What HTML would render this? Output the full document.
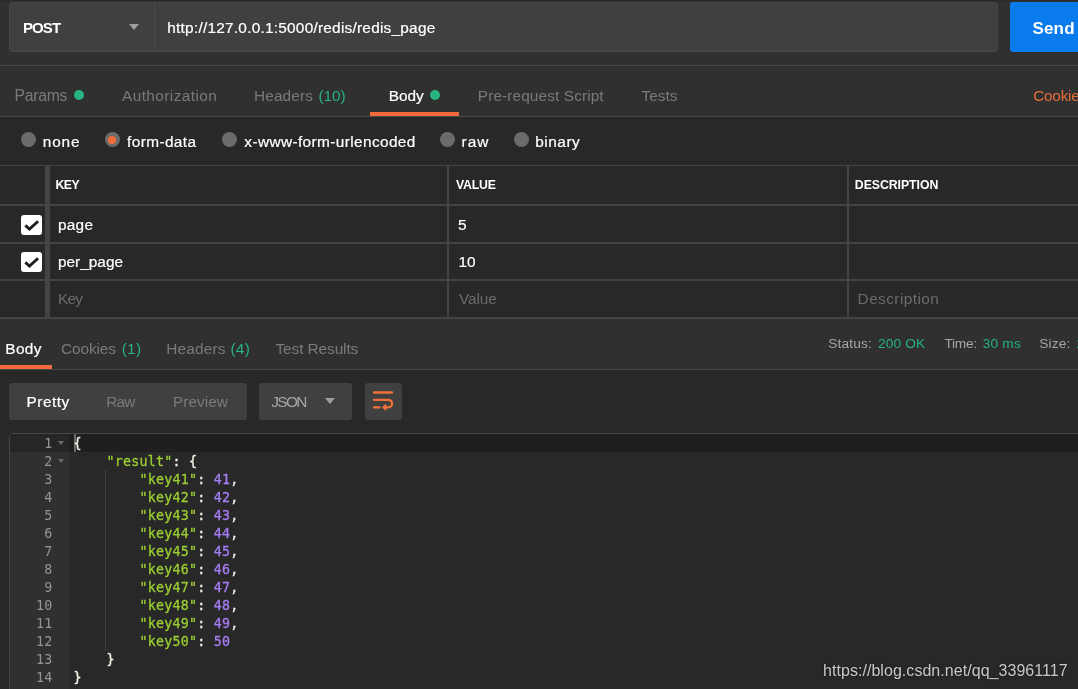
<!DOCTYPE html>
<html lang="en">
<head>
<meta charset="utf-8">
<title>Postman</title>
<style>
html,body{margin:0;padding:0;}
body{width:1078px;height:689px;overflow:hidden;background:#303030;position:relative;font-family:"Liberation Sans",sans-serif;}
.a{position:absolute;}
.t{position:absolute;white-space:pre;}
.c{-webkit-text-stroke:0.3px;}
.s{-webkit-text-stroke:0.2px;}
.radio{position:absolute;width:15px;height:15px;border-radius:50%;background:#6b6b6b;}
.hl{position:absolute;left:0;width:1078px;height:1px;background:#464646;}
.vl{position:absolute;width:1px;background:#464646;}
.cb{position:absolute;width:21.3px;height:20.4px;border-radius:3px;background:#fff;}
.tri{position:absolute;width:0;height:0;border-left:5px solid transparent;border-right:5px solid transparent;border-top:6.2px solid #9e9e9e;}
</style>
</head>
<body>
<!-- top strip -->
<div class="a" style="left:0;top:0;width:1078px;height:1px;background:#2a2a2a"></div>
<!-- url bar -->
<div class="a" style="left:9px;top:2px;width:989px;height:50px;border-radius:3px;background:#404040;border:1px solid #474747;box-sizing:border-box"></div>
<div class="a" style="left:154px;top:2px;width:1px;height:50px;background:#4a4a4a"></div>
<div class="tri" style="left:129px;top:23.8px"></div>
<!-- send -->
<div class="a" style="left:1010px;top:2px;width:80px;height:50px;border-radius:3px;background:#097bed"></div>
<div class="hl" style="top:65px"></div>
<!-- request tabs -->
<div class="a" style="left:74px;top:90.2px;width:10.2px;height:10.2px;border-radius:50%;background:#26b47f"></div>
<div class="a" style="left:429.8px;top:90.2px;width:10.2px;height:10.2px;border-radius:50%;background:#26b47f"></div>
<div class="a" style="left:370px;top:112px;width:89px;height:4px;background:#f26b3a"></div>
<div class="hl" style="top:116px"></div>
<!-- request body panel -->
<div class="a" style="left:0;top:117px;width:1078px;height:202px;background:#282828"></div>
<div class="radio" style="left:21px;top:132px"></div>
<div class="radio" style="left:104.5px;top:132px"><div class="a" style="left:3.5px;top:3.5px;width:8px;height:8px;border-radius:50%;background:#f26b3a"></div></div>
<div class="radio" style="left:222px;top:132px"></div>
<div class="radio" style="left:440px;top:132px"></div>
<div class="radio" style="left:514px;top:132px"></div>
<!-- table -->
<div class="hl" style="top:165px;background:#444"></div>
<div class="hl" style="top:204px;height:2px;background:#444"></div>
<div class="hl" style="top:242px;height:2px;background:#444"></div>
<div class="hl" style="top:279px;height:2px;background:#444"></div>
<div class="hl" style="top:317px;height:2px;background:#444"></div>
<div class="a" style="left:45px;top:166px;width:5px;height:152px;background:#444"></div>
<div class="vl" style="left:447px;top:166px;height:152px;width:2px;background:#444"></div>
<div class="vl" style="left:847px;top:166px;height:152px;width:2px;background:#444"></div>
<div class="cb" style="left:20.9px;top:214.8px"><svg width="21" height="20" viewBox="0 0 21 20"><path d="M4.3 10.4 L8.5 14.1 L17.1 6.3" fill="none" stroke="#1c1c1c" stroke-width="2.8"/></svg></div>
<div class="cb" style="left:20.9px;top:252px"><svg width="21" height="20" viewBox="0 0 21 20"><path d="M4.3 10.4 L8.5 14.1 L17.1 6.3" fill="none" stroke="#1c1c1c" stroke-width="2.8"/></svg></div>
<!-- response tabs -->
<div class="a" style="left:0;top:365px;width:52px;height:4px;background:#f26b3a"></div>
<div class="hl" style="top:369px"></div>
<!-- response panel -->
<div class="a" style="left:0;top:370px;width:1078px;height:319px;background:#282828"></div>
<div class="a" style="left:9px;top:383px;width:238px;height:37px;border-radius:3px;background:#404040"></div>
<div class="a" style="left:259px;top:383px;width:93px;height:37px;border-radius:3px;background:#404040"></div>
<div class="tri" style="left:325.2px;top:398.3px"></div>
<div class="a" style="left:365px;top:383px;width:37px;height:37px;border-radius:3px;background:#404040">
<svg width="37" height="37" viewBox="0 0 37 37"><g fill="none" stroke="#f5713a" stroke-width="2.3" stroke-linecap="round"><path d="M9 9.5H27"/><path d="M9 16.8H23.3a3.7 3.7 0 0 1 0 7.5H19"/><path d="M9 24.4H14.5"/></g><path d="M16.8 24.3L21.2 20.5V28.1Z" fill="#f5713a"/></svg>
</div>
<!-- editor -->
<div class="a" style="left:9px;top:433px;width:1080px;height:270px;border:1px solid #464646;border-radius:5px 0 0 0;background:#282828;box-sizing:border-box"></div>
<div class="a" style="left:10px;top:434px;width:59.3px;height:255px;background:#303030;border-radius:4px 0 0 0"></div>
<div class="a" style="left:10px;top:434px;width:59.3px;height:18px;background:#262626;border-radius:4px 0 0 0"></div>
<div class="a" style="left:69.3px;top:434px;width:1009px;height:18px;background:#1f1f1f"></div>
<div class="a" style="left:74px;top:434px;width:2px;height:18px;background:#6a6a6a"></div>
<div class="a" style="left:105px;top:471px;width:0;height:179px;border-left:1px dotted #555"></div>
<div class="tri" style="left:57.5px;top:441px;border-left-width:3.5px;border-right-width:3.5px;border-top:4px solid #6a6a6a"></div>
<div class="tri" style="left:57.5px;top:459px;border-left-width:3.5px;border-right-width:3.5px;border-top:4px solid #6a6a6a"></div>
<div class="a" style="left:0;top:0;width:1078px;height:689px;will-change:transform">
<span class="t" style="left:23px;top:19px;font-size:15px;line-height:17px;color:#ffffff;font-weight:700;letter-spacing:-0.933px;">POST</span>
<span class="t s" style="left:167.3px;top:19px;font-size:15.4px;line-height:17px;color:#ffffff;letter-spacing:0.235px;">http://127.0.0.1:5000/redis/redis_page</span>
<span class="t" style="left:1032.4px;top:19px;font-size:17px;line-height:19px;color:#ffffff;font-weight:700;letter-spacing:0.2px;">Send</span>
<span class="t" style="left:14.4px;top:87px;font-size:15.8px;line-height:17px;color:#7a7a7a;letter-spacing:-0.26px;">Params</span>
<span class="t" style="left:122px;top:87px;font-size:15.4px;line-height:17px;color:#7a7a7a;letter-spacing:0.417px;">Authorization</span>
<span class="t" style="left:254px;top:87px;font-size:15.4px;line-height:17px;color:#7a7a7a;letter-spacing:0.117px;">Headers</span>
<span class="t" style="left:318.4px;top:87px;font-size:15.4px;line-height:17px;color:#26b47f;letter-spacing:-0.033px;">(10)</span>
<span class="t s" style="left:388.8px;top:87px;font-size:15.4px;line-height:17px;color:#ffffff;letter-spacing:-0.033px;">Body</span>
<span class="t" style="left:477.8px;top:87px;font-size:15.4px;line-height:17px;color:#7a7a7a;letter-spacing:0.106px;">Pre-request Script</span>
<span class="t" style="left:641.6px;top:87px;font-size:15.4px;line-height:17px;color:#7a7a7a;letter-spacing:-0.025px;">Tests</span>
<span class="t" style="left:1033.3px;top:87px;font-size:15.4px;line-height:17px;color:#e66e3a;letter-spacing:-0.3px;">Cookies</span>
<span class="t s" style="left:42.8px;top:133px;font-size:15.4px;line-height:17px;color:#ffffff;letter-spacing:0.8px;">none</span>
<span class="t s" style="left:127px;top:133px;font-size:15.4px;line-height:17px;color:#ffffff;letter-spacing:0.4px;">form-data</span>
<span class="t s" style="left:244.3px;top:133px;font-size:15.4px;line-height:17px;color:#ffffff;letter-spacing:0.385px;">x-www-form-urlencoded</span>
<span class="t s" style="left:461.6px;top:133px;font-size:15.4px;line-height:17px;color:#ffffff;letter-spacing:0.95px;">raw</span>
<span class="t s" style="left:535.2px;top:133px;font-size:15.4px;line-height:17px;color:#ffffff;letter-spacing:0.54px;">binary</span>
<span class="t" style="left:55.5px;top:178px;font-size:12.3px;line-height:14px;color:#ffffff;font-weight:700;letter-spacing:-0.55px;">KEY</span>
<span class="t" style="left:456px;top:178px;font-size:12.3px;line-height:14px;color:#ffffff;font-weight:700;letter-spacing:-0.2px;">VALUE</span>
<span class="t" style="left:854.8px;top:178px;font-size:12.3px;line-height:14px;color:#ffffff;font-weight:700;letter-spacing:-0.05px;">DESCRIPTION</span>
<span class="t s" style="left:58px;top:216px;font-size:15.4px;line-height:17px;color:#ffffff;letter-spacing:0.233px;">page</span>
<span class="t s" style="left:458px;top:216px;font-size:15.4px;line-height:17px;color:#ffffff;">5</span>
<span class="t s" style="left:58px;top:253px;font-size:15.4px;line-height:17px;color:#ffffff;">per_page</span>
<span class="t s" style="left:458.6px;top:253px;font-size:15.4px;line-height:17px;color:#ffffff;letter-spacing:-0.2px;">10</span>
<span class="t" style="left:58px;top:290px;font-size:15.4px;line-height:17px;color:#6b6b6b;letter-spacing:-0.8px;">Key</span>
<span class="t" style="left:459px;top:290px;font-size:15.4px;line-height:17px;color:#6b6b6b;letter-spacing:-0.125px;">Value</span>
<span class="t" style="left:857.6px;top:290px;font-size:15.4px;line-height:17px;color:#6b6b6b;letter-spacing:0.42px;">Description</span>
<span class="t s" style="left:5.3px;top:340px;font-size:15.4px;line-height:17px;color:#ffffff;letter-spacing:0.367px;">Body</span>
<span class="t" style="left:61.1px;top:340px;font-size:15.4px;line-height:17px;color:#7a7a7a;letter-spacing:-0.133px;">Cookies</span>
<span class="t" style="left:121.7px;top:340px;font-size:15.4px;line-height:17px;color:#26b47f;letter-spacing:0.3px;">(1)</span>
<span class="t" style="left:166.3px;top:340px;font-size:15.4px;line-height:17px;color:#7a7a7a;letter-spacing:0.15px;">Headers</span>
<span class="t" style="left:230.4px;top:340px;font-size:15.4px;line-height:17px;color:#26b47f;letter-spacing:0.3px;">(4)</span>
<span class="t" style="left:275.5px;top:340px;font-size:15.4px;line-height:17px;color:#7a7a7a;letter-spacing:-0.091px;">Test Results</span>
<span class="t" style="left:828.3px;top:336px;font-size:13.7px;line-height:15px;color:#a6a6a6;letter-spacing:0.15px;">Status:</span>
<span class="t" style="left:878.1px;top:336px;font-size:13.7px;line-height:15px;color:#26b47f;letter-spacing:0.1px;">200 OK</span>
<span class="t" style="left:944.5px;top:336px;font-size:13.7px;line-height:15px;color:#a6a6a6;letter-spacing:-0.275px;">Time:</span>
<span class="t" style="left:982.8px;top:336px;font-size:13.7px;line-height:15px;color:#26b47f;letter-spacing:0.175px;">30 ms</span>
<span class="t" style="left:1039.2px;top:336px;font-size:13.7px;line-height:15px;color:#a6a6a6;letter-spacing:0.15px;">Size:</span>
<span class="t" style="left:1076.5px;top:336px;font-size:13.7px;line-height:15px;color:#26b47f;">2</span>
<span class="t s" style="left:26.5px;top:393px;font-size:15.4px;line-height:17px;color:#ffffff;letter-spacing:0.5px;">Pretty</span>
<span class="t" style="left:106.2px;top:393px;font-size:15.4px;line-height:17px;color:#7a7a7a;letter-spacing:-0.8px;">Raw</span>
<span class="t" style="left:173px;top:393px;font-size:15.4px;line-height:17px;color:#7a7a7a;letter-spacing:0.033px;">Preview</span>
<span class="t" style="left:271.3px;top:393px;font-size:15.4px;line-height:17px;color:#a6a6a6;letter-spacing:-1.633px;">JSON</span>
<span class="t" style="left:823px;top:662px;font-size:16px;line-height:17px;color:#c9c9c9;letter-spacing:0.047px;text-shadow:0 0 2px rgba(0,0,0,.55);">https://blog.csdn.net/qq_33961117</span>
<span class="t" style="left:44.35px;top:436px;font-size:13.3px;line-height:15px;color:#969696;font-family:'DejaVu Sans Mono', 'Liberation Mono', monospace;letter-spacing:0.243px;">1</span>
<span class="t" style="left:44.35px;top:454px;font-size:13.3px;line-height:15px;color:#969696;font-family:'DejaVu Sans Mono', 'Liberation Mono', monospace;letter-spacing:0.243px;">2</span>
<span class="t" style="left:44.35px;top:472px;font-size:13.3px;line-height:15px;color:#969696;font-family:'DejaVu Sans Mono', 'Liberation Mono', monospace;letter-spacing:0.243px;">3</span>
<span class="t" style="left:44.35px;top:490px;font-size:13.3px;line-height:15px;color:#969696;font-family:'DejaVu Sans Mono', 'Liberation Mono', monospace;letter-spacing:0.243px;">4</span>
<span class="t" style="left:44.35px;top:508px;font-size:13.3px;line-height:15px;color:#969696;font-family:'DejaVu Sans Mono', 'Liberation Mono', monospace;letter-spacing:0.243px;">5</span>
<span class="t" style="left:44.35px;top:526px;font-size:13.3px;line-height:15px;color:#969696;font-family:'DejaVu Sans Mono', 'Liberation Mono', monospace;letter-spacing:0.243px;">6</span>
<span class="t" style="left:44.35px;top:544px;font-size:13.3px;line-height:15px;color:#969696;font-family:'DejaVu Sans Mono', 'Liberation Mono', monospace;letter-spacing:0.243px;">7</span>
<span class="t" style="left:44.35px;top:562px;font-size:13.3px;line-height:15px;color:#969696;font-family:'DejaVu Sans Mono', 'Liberation Mono', monospace;letter-spacing:0.243px;">8</span>
<span class="t" style="left:44.35px;top:580px;font-size:13.3px;line-height:15px;color:#969696;font-family:'DejaVu Sans Mono', 'Liberation Mono', monospace;letter-spacing:0.243px;">9</span>
<span class="t" style="left:36.1px;top:598px;font-size:13.3px;line-height:15px;color:#969696;font-family:'DejaVu Sans Mono', 'Liberation Mono', monospace;letter-spacing:0.243px;">10</span>
<span class="t" style="left:36.1px;top:616px;font-size:13.3px;line-height:15px;color:#969696;font-family:'DejaVu Sans Mono', 'Liberation Mono', monospace;letter-spacing:0.243px;">11</span>
<span class="t" style="left:36.1px;top:634px;font-size:13.3px;line-height:15px;color:#969696;font-family:'DejaVu Sans Mono', 'Liberation Mono', monospace;letter-spacing:0.243px;">12</span>
<span class="t" style="left:36.1px;top:652px;font-size:13.3px;line-height:15px;color:#969696;font-family:'DejaVu Sans Mono', 'Liberation Mono', monospace;letter-spacing:0.243px;">13</span>
<span class="t" style="left:36.1px;top:670px;font-size:13.3px;line-height:15px;color:#969696;font-family:'DejaVu Sans Mono', 'Liberation Mono', monospace;letter-spacing:0.243px;">14</span>
<span class="t c" style="left:73.5px;top:436px;font-size:13.3px;line-height:15px;color:#f2f2e6;font-family:'DejaVu Sans Mono', 'Liberation Mono', monospace;letter-spacing:0.243px;">{</span>
<span class="t c" style="left:106.5px;top:454px;font-size:13.3px;line-height:15px;color:#9acd32;font-family:'DejaVu Sans Mono', 'Liberation Mono', monospace;letter-spacing:0.243px;">"result"</span>
<span class="t c" style="left:172.5px;top:454px;font-size:13.3px;line-height:15px;color:#f2f2e6;font-family:'DejaVu Sans Mono', 'Liberation Mono', monospace;letter-spacing:0.243px;">: {</span>
<span class="t c" style="left:139.5px;top:472px;font-size:13.3px;line-height:15px;color:#9acd32;font-family:'DejaVu Sans Mono', 'Liberation Mono', monospace;letter-spacing:0.243px;">"key41"</span>
<span class="t c" style="left:197.25px;top:472px;font-size:13.3px;line-height:15px;color:#f2f2e6;font-family:'DejaVu Sans Mono', 'Liberation Mono', monospace;letter-spacing:0.243px;">:</span>
<span class="t c" style="left:213.75px;top:472px;font-size:13.3px;line-height:15px;color:#a77df5;font-family:'DejaVu Sans Mono', 'Liberation Mono', monospace;letter-spacing:0.243px;">41</span>
<span class="t c" style="left:230.25px;top:472px;font-size:13.3px;line-height:15px;color:#f2f2e6;font-family:'DejaVu Sans Mono', 'Liberation Mono', monospace;letter-spacing:0.243px;">,</span>
<span class="t c" style="left:139.5px;top:490px;font-size:13.3px;line-height:15px;color:#9acd32;font-family:'DejaVu Sans Mono', 'Liberation Mono', monospace;letter-spacing:0.243px;">"key42"</span>
<span class="t c" style="left:197.25px;top:490px;font-size:13.3px;line-height:15px;color:#f2f2e6;font-family:'DejaVu Sans Mono', 'Liberation Mono', monospace;letter-spacing:0.243px;">:</span>
<span class="t c" style="left:213.75px;top:490px;font-size:13.3px;line-height:15px;color:#a77df5;font-family:'DejaVu Sans Mono', 'Liberation Mono', monospace;letter-spacing:0.243px;">42</span>
<span class="t c" style="left:230.25px;top:490px;font-size:13.3px;line-height:15px;color:#f2f2e6;font-family:'DejaVu Sans Mono', 'Liberation Mono', monospace;letter-spacing:0.243px;">,</span>
<span class="t c" style="left:139.5px;top:508px;font-size:13.3px;line-height:15px;color:#9acd32;font-family:'DejaVu Sans Mono', 'Liberation Mono', monospace;letter-spacing:0.243px;">"key43"</span>
<span class="t c" style="left:197.25px;top:508px;font-size:13.3px;line-height:15px;color:#f2f2e6;font-family:'DejaVu Sans Mono', 'Liberation Mono', monospace;letter-spacing:0.243px;">:</span>
<span class="t c" style="left:213.75px;top:508px;font-size:13.3px;line-height:15px;color:#a77df5;font-family:'DejaVu Sans Mono', 'Liberation Mono', monospace;letter-spacing:0.243px;">43</span>
<span class="t c" style="left:230.25px;top:508px;font-size:13.3px;line-height:15px;color:#f2f2e6;font-family:'DejaVu Sans Mono', 'Liberation Mono', monospace;letter-spacing:0.243px;">,</span>
<span class="t c" style="left:139.5px;top:526px;font-size:13.3px;line-height:15px;color:#9acd32;font-family:'DejaVu Sans Mono', 'Liberation Mono', monospace;letter-spacing:0.243px;">"key44"</span>
<span class="t c" style="left:197.25px;top:526px;font-size:13.3px;line-height:15px;color:#f2f2e6;font-family:'DejaVu Sans Mono', 'Liberation Mono', monospace;letter-spacing:0.243px;">:</span>
<span class="t c" style="left:213.75px;top:526px;font-size:13.3px;line-height:15px;color:#a77df5;font-family:'DejaVu Sans Mono', 'Liberation Mono', monospace;letter-spacing:0.243px;">44</span>
<span class="t c" style="left:230.25px;top:526px;font-size:13.3px;line-height:15px;color:#f2f2e6;font-family:'DejaVu Sans Mono', 'Liberation Mono', monospace;letter-spacing:0.243px;">,</span>
<span class="t c" style="left:139.5px;top:544px;font-size:13.3px;line-height:15px;color:#9acd32;font-family:'DejaVu Sans Mono', 'Liberation Mono', monospace;letter-spacing:0.243px;">"key45"</span>
<span class="t c" style="left:197.25px;top:544px;font-size:13.3px;line-height:15px;color:#f2f2e6;font-family:'DejaVu Sans Mono', 'Liberation Mono', monospace;letter-spacing:0.243px;">:</span>
<span class="t c" style="left:213.75px;top:544px;font-size:13.3px;line-height:15px;color:#a77df5;font-family:'DejaVu Sans Mono', 'Liberation Mono', monospace;letter-spacing:0.243px;">45</span>
<span class="t c" style="left:230.25px;top:544px;font-size:13.3px;line-height:15px;color:#f2f2e6;font-family:'DejaVu Sans Mono', 'Liberation Mono', monospace;letter-spacing:0.243px;">,</span>
<span class="t c" style="left:139.5px;top:562px;font-size:13.3px;line-height:15px;color:#9acd32;font-family:'DejaVu Sans Mono', 'Liberation Mono', monospace;letter-spacing:0.243px;">"key46"</span>
<span class="t c" style="left:197.25px;top:562px;font-size:13.3px;line-height:15px;color:#f2f2e6;font-family:'DejaVu Sans Mono', 'Liberation Mono', monospace;letter-spacing:0.243px;">:</span>
<span class="t c" style="left:213.75px;top:562px;font-size:13.3px;line-height:15px;color:#a77df5;font-family:'DejaVu Sans Mono', 'Liberation Mono', monospace;letter-spacing:0.243px;">46</span>
<span class="t c" style="left:230.25px;top:562px;font-size:13.3px;line-height:15px;color:#f2f2e6;font-family:'DejaVu Sans Mono', 'Liberation Mono', monospace;letter-spacing:0.243px;">,</span>
<span class="t c" style="left:139.5px;top:580px;font-size:13.3px;line-height:15px;color:#9acd32;font-family:'DejaVu Sans Mono', 'Liberation Mono', monospace;letter-spacing:0.243px;">"key47"</span>
<span class="t c" style="left:197.25px;top:580px;font-size:13.3px;line-height:15px;color:#f2f2e6;font-family:'DejaVu Sans Mono', 'Liberation Mono', monospace;letter-spacing:0.243px;">:</span>
<span class="t c" style="left:213.75px;top:580px;font-size:13.3px;line-height:15px;color:#a77df5;font-family:'DejaVu Sans Mono', 'Liberation Mono', monospace;letter-spacing:0.243px;">47</span>
<span class="t c" style="left:230.25px;top:580px;font-size:13.3px;line-height:15px;color:#f2f2e6;font-family:'DejaVu Sans Mono', 'Liberation Mono', monospace;letter-spacing:0.243px;">,</span>
<span class="t c" style="left:139.5px;top:598px;font-size:13.3px;line-height:15px;color:#9acd32;font-family:'DejaVu Sans Mono', 'Liberation Mono', monospace;letter-spacing:0.243px;">"key48"</span>
<span class="t c" style="left:197.25px;top:598px;font-size:13.3px;line-height:15px;color:#f2f2e6;font-family:'DejaVu Sans Mono', 'Liberation Mono', monospace;letter-spacing:0.243px;">:</span>
<span class="t c" style="left:213.75px;top:598px;font-size:13.3px;line-height:15px;color:#a77df5;font-family:'DejaVu Sans Mono', 'Liberation Mono', monospace;letter-spacing:0.243px;">48</span>
<span class="t c" style="left:230.25px;top:598px;font-size:13.3px;line-height:15px;color:#f2f2e6;font-family:'DejaVu Sans Mono', 'Liberation Mono', monospace;letter-spacing:0.243px;">,</span>
<span class="t c" style="left:139.5px;top:616px;font-size:13.3px;line-height:15px;color:#9acd32;font-family:'DejaVu Sans Mono', 'Liberation Mono', monospace;letter-spacing:0.243px;">"key49"</span>
<span class="t c" style="left:197.25px;top:616px;font-size:13.3px;line-height:15px;color:#f2f2e6;font-family:'DejaVu Sans Mono', 'Liberation Mono', monospace;letter-spacing:0.243px;">:</span>
<span class="t c" style="left:213.75px;top:616px;font-size:13.3px;line-height:15px;color:#a77df5;font-family:'DejaVu Sans Mono', 'Liberation Mono', monospace;letter-spacing:0.243px;">49</span>
<span class="t c" style="left:230.25px;top:616px;font-size:13.3px;line-height:15px;color:#f2f2e6;font-family:'DejaVu Sans Mono', 'Liberation Mono', monospace;letter-spacing:0.243px;">,</span>
<span class="t c" style="left:139.5px;top:634px;font-size:13.3px;line-height:15px;color:#9acd32;font-family:'DejaVu Sans Mono', 'Liberation Mono', monospace;letter-spacing:0.243px;">"key50"</span>
<span class="t c" style="left:197.25px;top:634px;font-size:13.3px;line-height:15px;color:#f2f2e6;font-family:'DejaVu Sans Mono', 'Liberation Mono', monospace;letter-spacing:0.243px;">:</span>
<span class="t c" style="left:213.75px;top:634px;font-size:13.3px;line-height:15px;color:#a77df5;font-family:'DejaVu Sans Mono', 'Liberation Mono', monospace;letter-spacing:0.243px;">50</span>
<span class="t c" style="left:106.5px;top:652px;font-size:13.3px;line-height:15px;color:#f2f2e6;font-family:'DejaVu Sans Mono', 'Liberation Mono', monospace;letter-spacing:0.243px;">}</span>
<span class="t c" style="left:73.5px;top:670px;font-size:13.3px;line-height:15px;color:#f2f2e6;font-family:'DejaVu Sans Mono', 'Liberation Mono', monospace;letter-spacing:0.243px;">}</span>
</div>
</body>
</html>
